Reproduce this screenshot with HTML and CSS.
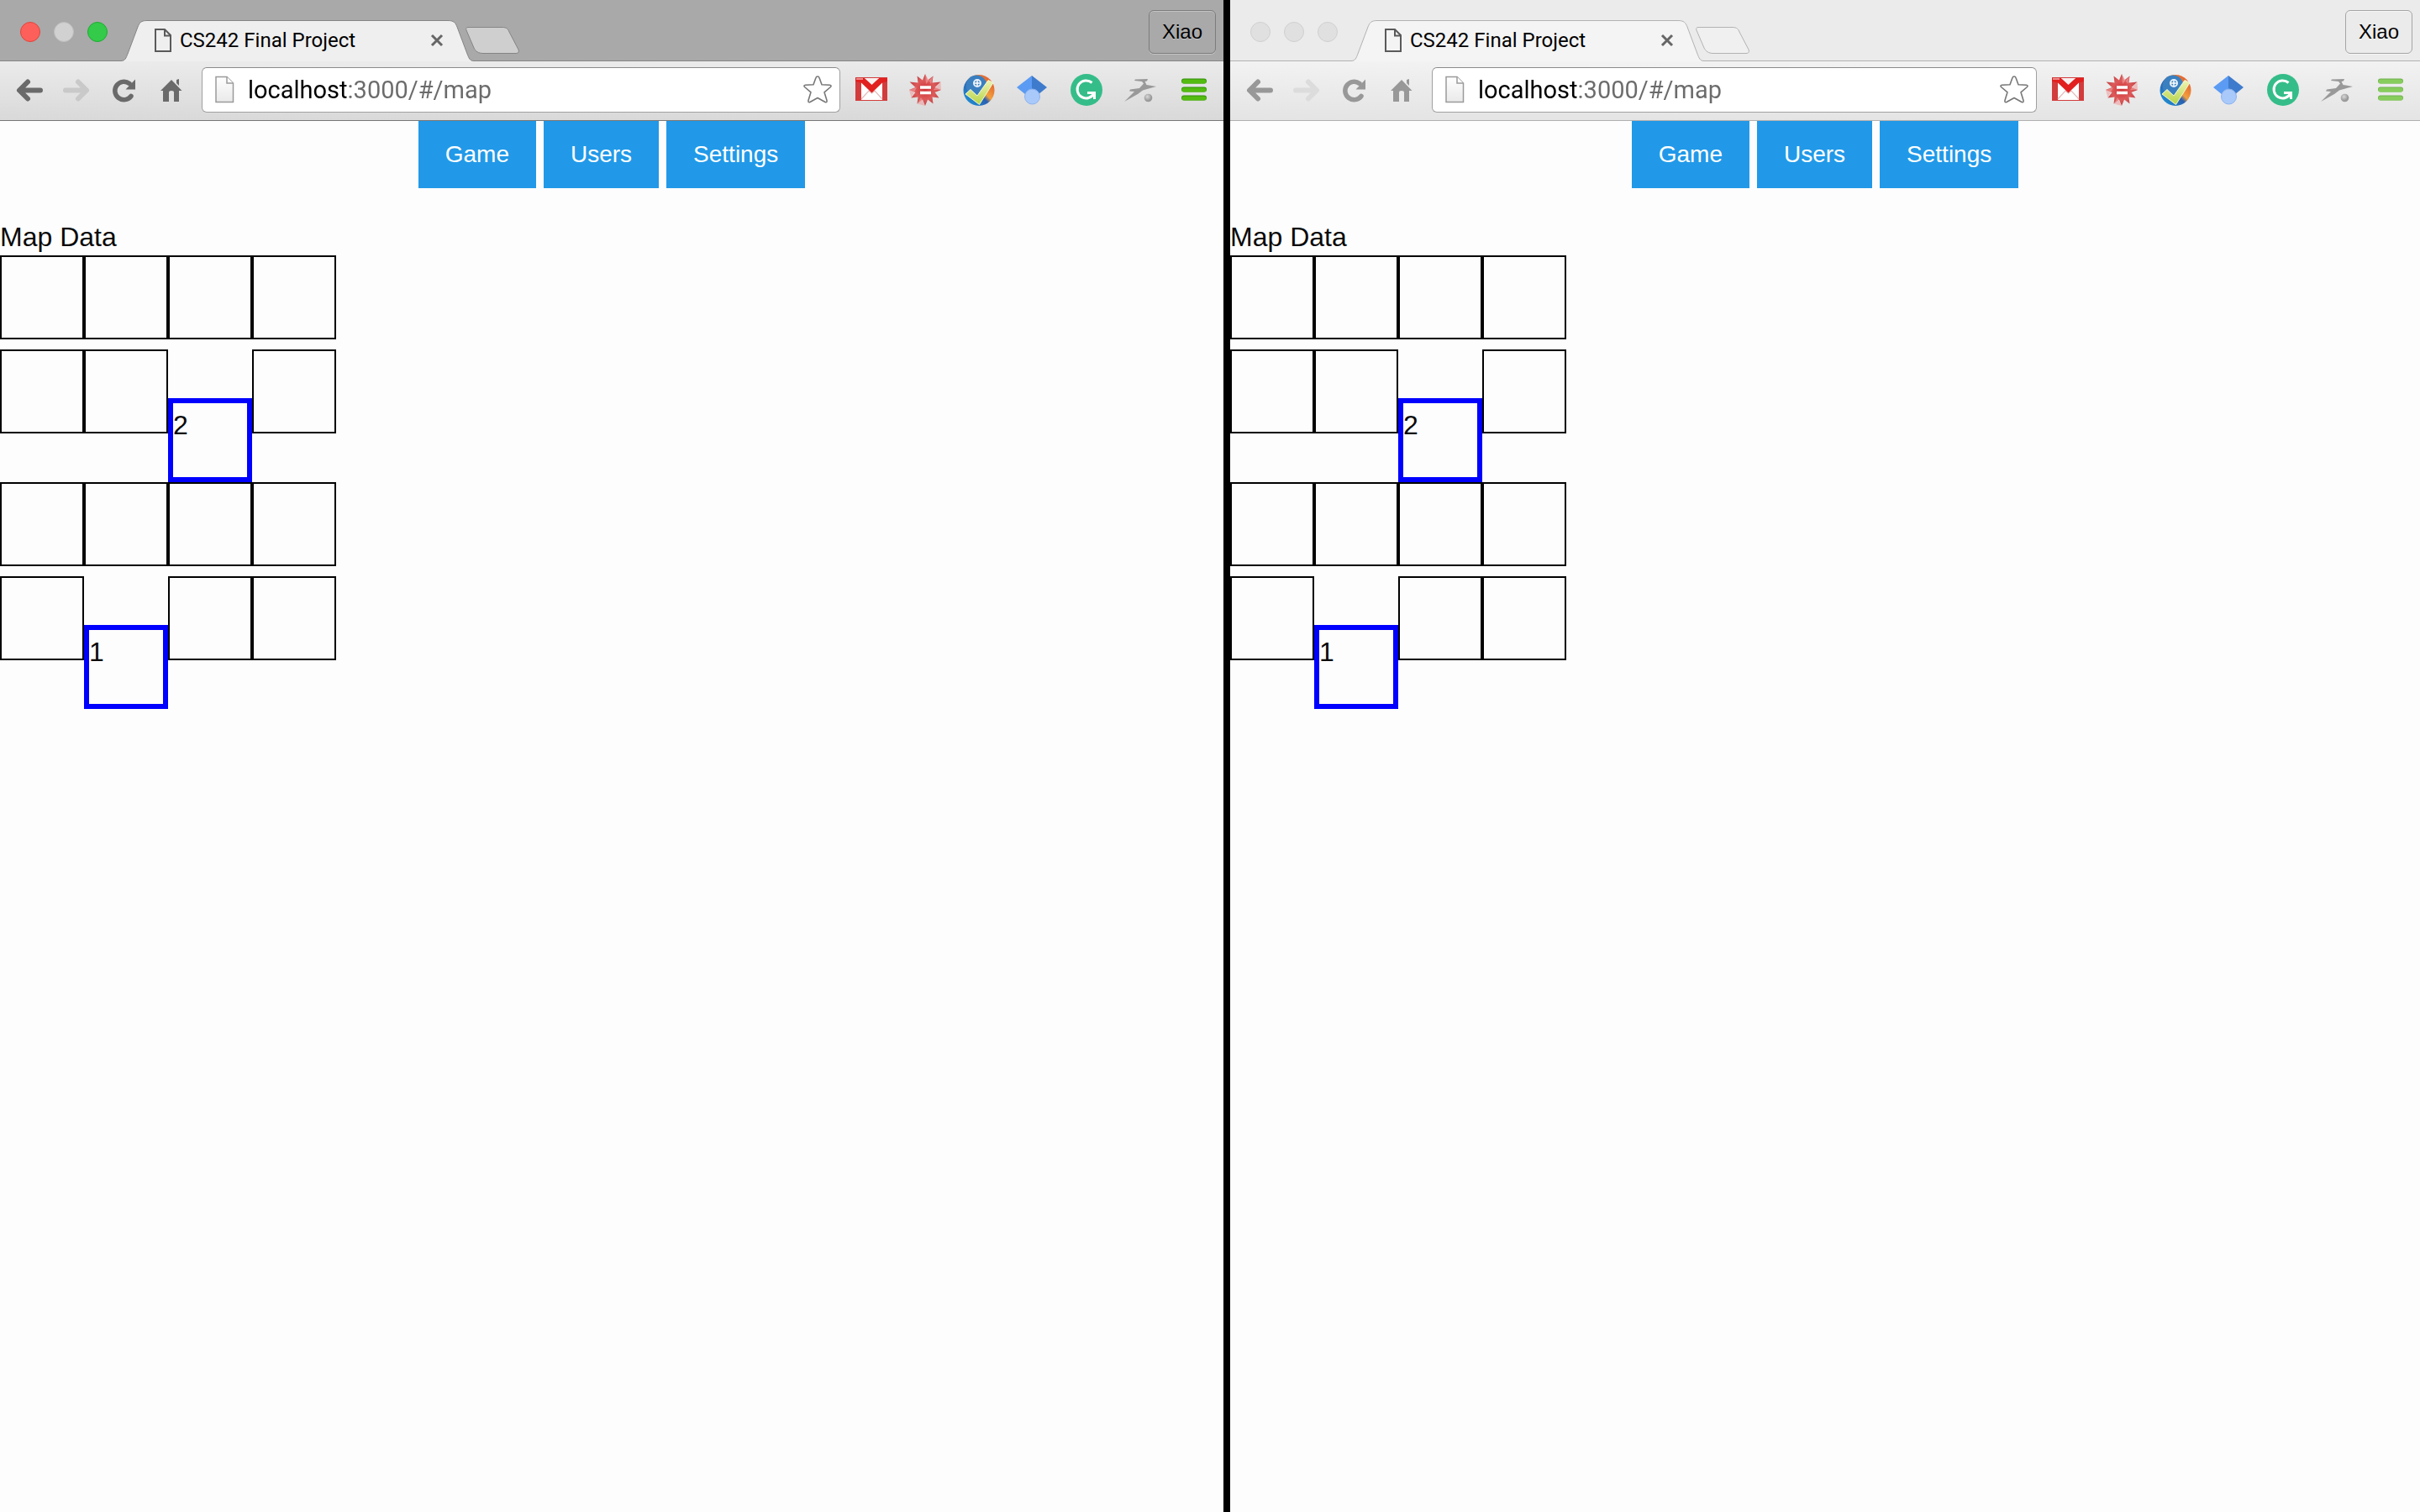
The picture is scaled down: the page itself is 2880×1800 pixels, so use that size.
FILE: index.html
```html
<!DOCTYPE html>
<html lang="en">
<head>
<meta charset="utf-8">
<title>CS242 Final Project</title>
<link rel="stylesheet" href="styles.css">
</head>
<body>

<svg class="sprite" aria-hidden="true">
  <defs>
    <linearGradient id="paper" x1="0" y1="0" x2="0" y2="1"><stop offset="0" stop-color="#fff"/><stop offset="1" stop-color="#e9e9e9"/></linearGradient>
    <linearGradient id="ring" x1="0" y1="1" x2="1" y2="0"><stop offset="0" stop-color="#1c9fe0"/><stop offset=".45" stop-color="#2a5fb0"/><stop offset=".55" stop-color="#f2a03c"/><stop offset="1" stop-color="#d8452a"/></linearGradient>
    <linearGradient id="tick" x1="0" y1="0" x2="0" y2="1"><stop offset="0" stop-color="#eef3b4"/><stop offset="1" stop-color="#b5d445"/></linearGradient>
    <radialGradient id="burst"><stop offset="0" stop-color="#cf3236"/><stop offset=".6" stop-color="#dd5a5a"/><stop offset="1" stop-color="#c5474a"/></radialGradient>
    <radialGradient id="ball" cx=".4" cy=".35"><stop offset="0" stop-color="#d8d8d8"/><stop offset="1" stop-color="#9a9a9a"/></radialGradient>
  </defs>
  <symbol id="tab-shape" viewBox="0 0 420 50">
    <path class="tab-fill" d="M0 50V49.500C5 49.500 6 46 8 41L20 9C22 4 24 1.500 31 1.500H389C396 1.500 398 4 400 9L412 41C414 46 415 49.500 420 49.500V50Z"/>
    <path class="tab-line" d="M0 49.500C5 49.500 6 46 8 41L20 9C22 4 24 1.500 31 1.500H389C396 1.500 398 4 400 9L412 41C414 46 415 49.500 420 49.500"/>
  </symbol>
  <symbol id="new-tab-shape" viewBox="0 0 68 36">
    <path class="new-tab-fill" d="M5 2.500H46C51 2.500 53 5 54 8L65 29C66 32 65 33.500 62 33.500H23C17 33.500 14 31 12 27L3 6C2 4 3 2.500 5 2.500Z"/>
  </symbol>
  <symbol id="doc" viewBox="0 0 20 28">
    <path d="M1 1H12L19 8V27H1ZM12 1V8.500H19" fill="none" stroke="#5a5a5a" stroke-width="2"/>
  </symbol>
  <symbol id="close" viewBox="0 0 16 16">
    <path d="M2 2L14 14M14 2L2 14" fill="none" stroke="#666" stroke-width="3"/>
  </symbol>
  <symbol id="back" viewBox="0 0 56 54">
    <path d="M25 17.500L15 27.500L25 37.500M16 27.500H40" fill="none" stroke="currentColor" stroke-width="6" stroke-linecap="round" stroke-linejoin="round"/>
  </symbol>
  <symbol id="forward" viewBox="0 0 56 54">
    <path d="M29 17.500L39 27.500L29 37.500M14 27.500H38" fill="none" stroke="currentColor" stroke-width="6" stroke-linecap="round" stroke-linejoin="round"/>
  </symbol>
  <symbol id="reload" viewBox="0 0 56 54">
    <path d="M34 19.500A10.700 10.700 0 1 0 36 34.500" fill="none" stroke="currentColor" stroke-width="5.500" stroke-linecap="round"/>
    <path d="M41 14.500V26.500H29.500Z" fill="currentColor"/>
  </symbol>
  <symbol id="home" viewBox="0 0 56 54">
    <path d="M28 15L40.500 28H37V41H31V30Q31 28 28 28T25 30V41H18V28H15Z" fill="currentColor"/>
    <path d="M34 15L37 14V22L34 19Z" fill="currentColor"/>
  </symbol>
  <symbol id="page" viewBox="0 0 24 34">
    <path d="M2 1.500H15L22.500 9V31.500H2Z" fill="url(#paper)" stroke="#9a9a9a" stroke-width="1.500"/>
    <path d="M15 1.500V9H22.500" fill="#fff" stroke="#9a9a9a" stroke-width="1.500"/>
  </symbol>
  <symbol id="star" viewBox="0 0 36 36">
    <path d="M18 2Q19.500 2 20 3.500L23 11.800 32.500 12.300Q35 12.800 33.500 14.500L26 20.800 29 30.500Q29.500 33.500 27 32.500L18 27.500 9 32.500Q6.500 33.500 7 30.500L10 20.800 2.500 14.500Q1 12.800 3.500 12.300L13 11.800 16 3.500Q16.500 2 18 2Z" fill="#fff" stroke="#777" stroke-width="1.600" stroke-linejoin="round"/>
  </symbol>
  <symbol id="mail" viewBox="0 0 64 54">
    <rect x="13" y="12" width="38" height="28" fill="#d23c3c"/>
    <rect x="20" y="13" width="25" height="26" fill="#fff"/>
    <path d="M20 38L29 28L32.500 31L36 28L45 38" fill="none" stroke="#e6b9b9" stroke-width="1.200"/>
    <path d="M13 13H24L32.500 20L41 13H51V17L45 18.500L32.500 30.500L20 18.500L13 17Z" fill="#e1201f"/>
    <path d="M24 13H41L32.500 21Z" fill="#faf0f0"/>
    <path d="M14 14H22" stroke="#ec8a8a" stroke-width="2"/>
  </symbol>
  <symbol id="starburst" viewBox="0 0 64 54">
    <path d="M32 8L35.100 15.400 41.500 10.500 40.500 18.500 50.500 17.500 43.600 23.900 51 27 43.600 30.100 48.500 36.500 40.500 35.500 41.500 43.500 35.100 38.600 32 46 28.900 38.600 22.500 43.500 23.500 35.500 15.500 36.500 20.400 30.100 13 27 20.400 23.900 13.500 17.500 23.500 18.500 22.500 10.500 28.900 15.400Z" fill="url(#burst)"/>
    <path d="M32 8L33 20L41.500 10.500L39 20ZM51 27L42 27L50.500 17.500ZM13 27L22 24L15.500 36.500ZM22.500 43.500L27 36L32 46Z" fill="#f0a0a0" opacity=".6"/>
    <path d="M26 24H39M26 30.500H39" stroke="#fff" stroke-width="3.500"/>
  </symbol>
  <symbol id="check" viewBox="0 0 64 54">
    <circle cx="32" cy="27.500" r="18.500" fill="url(#ring)"/>
    <circle cx="29" cy="22" r="12.500" fill="#3a7fc0"/>
    <circle cx="30" cy="19" r="4" fill="none" stroke="#e8f2fb" stroke-width="2"/>
    <path d="M30 16V22M27 19H33" stroke="#fff" stroke-width="1.500"/>
    <path d="M16 32L22 26.500L30 34L43 15.500L49 18.500L32.500 44.500Z" fill="url(#tick)" stroke="#f5f8d8" stroke-width="1"/>
  </symbol>
  <symbol id="scholar" viewBox="0 0 64 54">
    <path d="M31 10L13 24L24 33H31Z" fill="#5b9bf3"/>
    <path d="M31 10L49 24L38 33H31Z" fill="#3f7bcd"/>
    <circle cx="31.500" cy="35" r="9" fill="#a9c9fa" stroke="#8ab3ef" stroke-width="1"/>
  </symbol>
  <symbol id="grammar" viewBox="0 0 64 54">
    <circle cx="32" cy="27" r="19" fill="#35bd89"/>
    <path d="M38.500 18.500A10.500 10.500 0 1 0 41 31" fill="none" stroke="#fff" stroke-width="3"/>
    <path d="M33 30.500H41.500V38" fill="none" stroke="#fff" stroke-width="3"/>
  </symbol>
  <symbol id="runner" viewBox="0 0 64 54">
    <path d="M13 41L25 29L19 28.500L20 26.500L31 25L36 19.500L34 17L25 16L26 14.500L41 14L40 16.500L37.500 17L39.500 21L51 23L42 25.500L35 27.500L29 32Z" fill="#999"/>
    <circle cx="41.500" cy="36.500" r="4.800" fill="url(#ball)"/>
  </symbol>
  <symbol id="menu" viewBox="0 0 64 54">
    <path class="bar-edge" d="M20 16.500H44M20 26.500H44M20 36.500H44"/>
    <path class="bar" d="M20 17H44M20 27H44M20 37H44"/>
  </symbol>
</svg>

<section class="window active">
  <header class="tab-strip">
    <div class="lights">
      <button class="light close" aria-label="Close window"></button>
      <button class="light minimize" aria-label="Minimize window"></button>
      <button class="light zoom" aria-label="Zoom window"></button>
    </div>
    <div class="tab">
      <svg class="tab-bg"><use href="#tab-shape"/></svg>
      <svg class="doc"><use href="#doc"/></svg>
      <span class="tab-title">CS242 Final Project</span>
      <button class="tab-close" aria-label="Close tab"><svg><use href="#close"/></svg></button>
    </div>
    <button class="new-tab" aria-label="New tab"><svg><use href="#new-tab-shape"/></svg></button>
    <button class="profile">Xiao</button>
  </header>
  <div class="toolbar">
    <button class="tool" aria-label="Back"><svg><use href="#back"/></svg></button>
    <button class="tool" aria-label="Forward" disabled><svg><use href="#forward"/></svg></button>
    <button class="tool" aria-label="Reload"><svg><use href="#reload"/></svg></button>
    <button class="tool" aria-label="Home"><svg><use href="#home"/></svg></button>
    <div class="omnibox">
      <svg class="page"><use href="#page"/></svg>
      <input class="url" type="text" aria-label="Address" value="localhost:3000/#/map">
      <button class="star" aria-label="Bookmark"><svg><use href="#star"/></svg></button>
    </div>
    <div class="extensions">
      <button class="ext" aria-label="Mail"><svg><use href="#mail"/></svg></button>
      <button class="ext" aria-label="Wolfram"><svg><use href="#starburst"/></svg></button>
      <button class="ext" aria-label="Checker"><svg><use href="#check"/></svg></button>
      <button class="ext" aria-label="Scholar"><svg><use href="#scholar"/></svg></button>
      <button class="ext" aria-label="Grammar"><svg><use href="#grammar"/></svg></button>
      <button class="ext" aria-label="Runner"><svg><use href="#runner"/></svg></button>
      <button class="ext" aria-label="Menu"><svg><use href="#menu"/></svg></button>
    </div>
  </div>
  <main class="content">
    <nav class="nav"><a href="#/game">Game</a><a href="#/users">Users</a><a href="#/settings">Settings</a></nav>
    <h1 class="heading">Map Data</h1>
    <div class="map">
      <div class="row"><div class="cell"></div><div class="cell"></div><div class="cell"></div><div class="cell"></div></div>
      <div class="row"><div class="cell"></div><div class="cell"></div><div class="cell player">2</div><div class="cell"></div></div>
      <div class="row"><div class="cell"></div><div class="cell"></div><div class="cell"></div><div class="cell"></div></div>
      <div class="row"><div class="cell"></div><div class="cell player">1</div><div class="cell"></div><div class="cell"></div></div>
    </div>
  </main>
</section>

<section class="window inactive">
  <header class="tab-strip">
    <div class="lights">
      <button class="light" aria-label="Close window"></button>
      <button class="light" aria-label="Minimize window"></button>
      <button class="light" aria-label="Zoom window"></button>
    </div>
    <div class="tab">
      <svg class="tab-bg"><use href="#tab-shape"/></svg>
      <svg class="doc"><use href="#doc"/></svg>
      <span class="tab-title">CS242 Final Project</span>
      <button class="tab-close" aria-label="Close tab"><svg><use href="#close"/></svg></button>
    </div>
    <button class="new-tab" aria-label="New tab"><svg><use href="#new-tab-shape"/></svg></button>
    <button class="profile">Xiao</button>
  </header>
  <div class="toolbar">
    <button class="tool" aria-label="Back"><svg><use href="#back"/></svg></button>
    <button class="tool" aria-label="Forward" disabled><svg><use href="#forward"/></svg></button>
    <button class="tool" aria-label="Reload"><svg><use href="#reload"/></svg></button>
    <button class="tool" aria-label="Home"><svg><use href="#home"/></svg></button>
    <div class="omnibox">
      <svg class="page"><use href="#page"/></svg>
      <input class="url" type="text" aria-label="Address" value="localhost:3000/#/map">
      <button class="star" aria-label="Bookmark"><svg><use href="#star"/></svg></button>
    </div>
    <div class="extensions">
      <button class="ext" aria-label="Mail"><svg><use href="#mail"/></svg></button>
      <button class="ext" aria-label="Wolfram"><svg><use href="#starburst"/></svg></button>
      <button class="ext" aria-label="Checker"><svg><use href="#check"/></svg></button>
      <button class="ext" aria-label="Scholar"><svg><use href="#scholar"/></svg></button>
      <button class="ext" aria-label="Grammar"><svg><use href="#grammar"/></svg></button>
      <button class="ext" aria-label="Runner"><svg><use href="#runner"/></svg></button>
      <button class="ext" aria-label="Menu"><svg><use href="#menu"/></svg></button>
    </div>
  </div>
  <main class="content">
    <nav class="nav"><a href="#/game">Game</a><a href="#/users">Users</a><a href="#/settings">Settings</a></nav>
    <h1 class="heading">Map Data</h1>
    <div class="map">
      <div class="row"><div class="cell"></div><div class="cell"></div><div class="cell"></div><div class="cell"></div></div>
      <div class="row"><div class="cell"></div><div class="cell"></div><div class="cell player">2</div><div class="cell"></div></div>
      <div class="row"><div class="cell"></div><div class="cell"></div><div class="cell"></div><div class="cell"></div></div>
      <div class="row"><div class="cell"></div><div class="cell player">1</div><div class="cell"></div><div class="cell"></div></div>
    </div>
  </main>
</section>

</body>
</html>
```
FILE: styles.css
```css
* { box-sizing: border-box; }

body {
  margin: 0;
  min-height: 100vh;
  display: flex;
  gap: 8px;
  background: #000;
  font-family: "Liberation Sans", Arial, sans-serif;
}

.sprite { position: absolute; width: 0; height: 0; }

button {
  margin: 0;
  padding: 0;
  border: 0;
  background: none;
  font-family: inherit;
  color: inherit;
}

button svg { display: block; width: 100%; height: 100%; }

/* Two browser windows side by side */
.window {
  display: flex;
  flex-direction: column;
  min-width: 0;
  background: #fdfdfd;
}

.active {
  flex: 182 1 0;
  --frame: #a9a9a9;
  --line: #858585;
  --edge: #777;
  --tab: #efefef;
  --new-tab: #cfcfcf;
  --bar-top: #ebebeb;
  --bar-bottom: #d9d9d9;
  --icon: #6a6a6a;
  --icon-off: #c9c9c9;
  --menu: #54bb10;
  --menu-edge: #2f8d09;
  --profile-line: #7c7c7c;
  --profile-glow: #c4c4c4;
}

.inactive {
  flex: 177 1 0;
  --frame: #ebebeb;
  --line: #b2b2b2;
  --edge: #b0b0b0;
  --tab: #f4f4f4;
  --new-tab: #f0f0f0;
  --bar-top: #f2f2f2;
  --bar-bottom: #e4e4e4;
  --icon: #989898;
  --icon-off: #dcdcdc;
  --menu: #87cd5c;
  --menu-edge: #70b050;
  --profile-line: #a5a5a5;
  --profile-glow: #f5f5f5;
}

/* Tab strip */
.tab-strip {
  height: 72px;
  display: flex;
  align-items: flex-end;
  padding: 0 9px 0 24px;
  background: var(--frame);
}

.lights { display: flex; gap: 16px; margin-right: 16px; padding-bottom: 22px; }

.light {
  width: 24px;
  height: 24px;
  border-radius: 50%;
  border: 1px solid #d0d0d0;
  background: #e0e0e0;
}

.light.close { background: #fd605a; border-color: #e0443e; }
.light.minimize { background: #d1d1d1; border-color: #bdbdbd; }
.light.zoom { background: #33cb49; border-color: #1fab33; }

.tab {
  position: relative;
  z-index: 1;
  flex: none;
  width: 420px;
  height: 50px;
  margin-bottom: -1px;
  padding: 0 36px 0 40px;
  display: flex;
  align-items: center;
}

.tab-bg { position: absolute; inset: 0; width: 100%; height: 100%; z-index: -1; }
.tab-fill { fill: var(--tab); }
.tab-line { fill: none; stroke: var(--line); }

.doc { width: 20px; height: 28px; margin-right: 10px; }

.tab-title { flex: 1; font: 24px/28px Roboto, sans-serif; color: #000; }

.tab-close { width: 16px; height: 16px; }

.new-tab { flex: none; width: 68px; height: 36px; margin-left: -12px; margin-bottom: 6px; }
.new-tab-fill { fill: var(--new-tab); stroke: var(--line); }

.profile {
  width: 80px;
  height: 52px;
  margin-left: auto;
  margin-bottom: 8px;
  border: 1px solid var(--profile-line);
  border-radius: 6px;
  box-shadow: 0 1px 0 var(--profile-glow), inset 0 1px 0 var(--profile-glow);
  font-size: 24px;
  line-height: 28px;
  color: #000;
  text-shadow: 0 1px 0 var(--profile-glow);
}

/* Toolbar */
.toolbar {
  height: 72px;
  display: flex;
  padding: 7px 3px 8px 8px;
  border-top: 1px solid var(--line);
  border-bottom: 1px solid var(--edge);
  background: linear-gradient(var(--bar-top), var(--bar-bottom));
}

.tool { flex: none; width: 56px; height: 54px; color: var(--icon); }
.tool:disabled { color: var(--icon-off); }

.omnibox {
  flex: 1;
  min-width: 0;
  height: 54px;
  margin: 0 5px 0 8px;
  padding: 0 8px 0 14px;
  display: flex;
  align-items: center;
  gap: 16px;
  border: 1px solid #a0a0a0;
  border-top-color: #8a8a8a;
  border-radius: 6px;
  background: #fff;
}

.page { flex: none; width: 24px; height: 34px; }

/* The host name is black and the rest of the address is grey */
.url {
  flex: 1;
  min-width: 0;
  height: 40px;
  padding: 0;
  border: 0;
  outline: 0;
  font: 29px/40px Roboto, sans-serif;
  color: transparent;
  background: linear-gradient(90deg, #000 119px, #6b6b6b 119px);
  -webkit-background-clip: text;
  background-clip: text;
}

.star { flex: none; width: 36px; height: 36px; }

.extensions { flex: none; display: flex; }
.ext { width: 64px; height: 54px; }

.bar, .bar-edge { fill: none; stroke-linecap: round; }
.bar-edge { stroke: var(--menu-edge); stroke-width: 6; }
.bar { stroke: var(--menu); stroke-width: 5; }

/* Page */
.content { flex: 1; color: #0a0a0a; }

.nav { display: flex; justify-content: center; gap: 9px; }

.nav a {
  padding: 0 32px;
  font-size: 28px;
  line-height: 80px;
  color: #fff;
  background: #2199e8;
  text-decoration: none;
}

.heading { margin: 40px 0 4px; font-size: 32px; line-height: 36px; font-weight: 400; }

.row { display: flex; align-items: flex-start; min-height: 112px; }

.cell { width: 100px; height: 100px; border: 2px solid #000; }

.player {
  margin-top: 58px;
  padding-top: 8px;
  border: 6px solid #00f;
  font-size: 32px;
  line-height: 36px;
}
```
